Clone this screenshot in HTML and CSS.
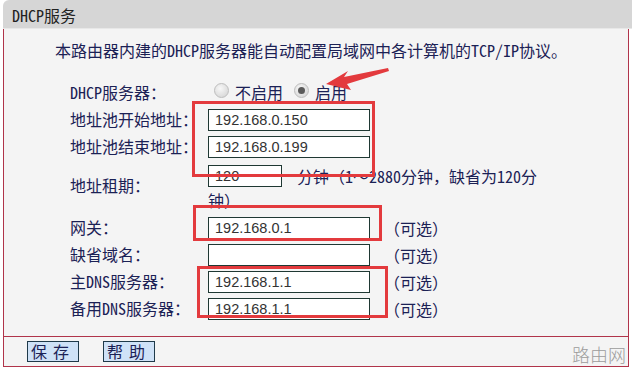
FILE: index.html
```html
<!DOCTYPE html>
<html lang="zh-CN">
<head>
<meta charset="utf-8">
<title>DHCP服务</title>
<link rel="stylesheet" href="styles.css">
</head>
<body>
<div class="page">
  <div class="hdr">DHCP服务</div>
  <div class="panel">
    <p class="intro">本路由器内建的DHCP服务器能自动配置局域网中各计算机的TCP/IP协议。</p>
    <div class="form">
      <div class="lbl r1">DHCP服务器：</div>
      <div class="fld r1">
        <span class="radio"></span><span class="rtxt">不启用</span>
        <span class="radio on"></span><span class="rtxt">启用</span>
      </div>

      <div class="lbl">地址池开始地址：</div>
      <div class="fld"><span class="inp">192.168.0.150</span></div>

      <div class="lbl">地址池结束地址：</div>
      <div class="fld"><span class="inp">192.168.0.199</span></div>

      <div class="lbl r4">地址租期：</div>
      <div class="fld r4 lease"><span class="inp short">120</span><span class="unit">分钟（1～2880分钟，缺省为120分钟）</span></div>

      <div class="lbl">网关：</div>
      <div class="fld"><span class="inp">192.168.0.1</span><span class="opt">（可选）</span></div>

      <div class="lbl">缺省域名：</div>
      <div class="fld"><span class="inp"></span><span class="opt">（可选）</span></div>

      <div class="lbl">主DNS服务器：</div>
      <div class="fld"><span class="inp">192.168.1.1</span><span class="opt">（可选）</span></div>

      <div class="lbl">备用DNS服务器：</div>
      <div class="fld"><span class="inp">192.168.1.1</span><span class="opt">（可选）</span></div>
    </div>
    <div class="foot">
      <span class="btn">保存</span>
      <span class="btn">帮助</span>
    </div>
  </div>

  <div class="mark box1"></div>
  <div class="mark box2"></div>
  <div class="mark box3"></div>
  <svg class="arrow" width="70" height="30" viewBox="0 0 70 30">
    <polygon points="0,16 22,3 18,9 62,0 63,3 21,16 25,22" fill="#e33a3d"/>
  </svg>
  <div class="wm">路由网</div>
</div>
</body>
</html>
```

FILE: styles.css
```css
html, body {
  margin: 0;
  padding: 0;
  background: #ffffff;
}
body {
  width: 632px;
  height: 370px;
  overflow: hidden;
  font-family: "Noto Sans Mono CJK SC", "Noto Sans CJK SC", sans-serif;
  font-size: 16px;
  color: #1b2155;
}
.page {
  position: relative;
  width: 632px;
  height: 370px;
}
.hdr {
  margin-left: 3px;
  height: 28px;
  line-height: 30px;
  padding-left: 9px;
  background: #d6d6d6;
  border-top-left-radius: 6px;
  border-bottom: 1px solid #e8e8e8;
  color: #222222;
}
.panel {
  margin-left: 3px;
  width: 624px;
  background: #f4f4f4;
  border-left: 1px solid #b0344a;
  border-right: 1px solid #b0344a;
  border-bottom: 1px solid #b0344a;
}
.intro {
  margin: 0;
  padding: 10px 0 0 51px;
  line-height: 22px;
  height: 22px;
  white-space: nowrap;
}
.form {
  margin-top: 17px;
  padding: 0 0 15px 66px;
  display: grid;
  grid-template-columns: 138px 1fr;
  grid-auto-rows: 27px;
  align-items: center;
}
.lbl, .fld {
  line-height: 22px;
  white-space: nowrap;
}
.r1 {
  height: 28px;
  line-height: 28px;
}
.fld.r1 {
  display: flex;
  align-items: center;
}
.form > .r1 { align-self: stretch; }
.lease {
  grid-row: span 2;
  align-self: stretch;
  white-space: normal;
  width: 338px;
  padding-top: 3px;
}
.lbl.r4 {
  grid-row: span 2;
  margin-top: -3px;
}
.radio {
  display: inline-block;
  width: 13px;
  height: 13px;
  border-radius: 50%;
  border: 1px solid #bdbdbd;
  background: radial-gradient(circle at 40% 35%, #f7f7f7 0%, #dcdcdc 70%, #cfcfcf 100%);
  margin-left: 6px;
  margin-right: 6px;
  position: relative;
  top: -2px;
}
.radio.on {
  margin-left: 11px;
}
.radio.on::after {
  content: "";
  position: absolute;
  left: 3px;
  top: 3px;
  width: 7px;
  height: 7px;
  border-radius: 50%;
  background: #5a5a5a;
}
.inp {
  display: inline-block;
  vertical-align: middle;
  box-sizing: border-box;
  width: 162px;
  height: 22px;
  border: 1px solid #1f3833;
  background: #ffffff;
  padding-left: 6px;
  font-family: "Liberation Sans", Arial, sans-serif;
  font-size: 14.5px;
  line-height: 20px;
  color: #333333;
}
.inp.short {
  width: 74px;
}
.unit {
  margin-left: 15px;
  vertical-align: middle;
}
.opt {
  margin-left: 14px;
  vertical-align: middle;
}
.foot {
  border-top: 1px solid #b0344a;
  padding: 4px 0 4px 23px;
  height: 21px;
  display: flex;
  gap: 24px;
}
.btn {
  box-sizing: border-box;
  width: 52px;
  height: 21px;
  border: 1px solid #1f3a4a;
  background: #cfe2f7;
  line-height: 19px;
  padding-left: 3px;
  letter-spacing: 6px;
  color: #1b2155;
}
.mark {
  position: absolute;
  border: 3px solid #e33a3d;
  box-sizing: border-box;
}
.box1 { left: 192px; top: 101px; width: 183px; height: 76px; }
.box2 { left: 193px; top: 205px; width: 189px; height: 36px; }
.box3 { left: 197px; top: 266px; width: 191px; height: 52px; }
.arrow {
  position: absolute;
  left: 326px;
  top: 68px;
}
.wm {
  position: absolute;
  left: 572px;
  top: 343px;
  font-family: "Noto Sans CJK SC", sans-serif;
  font-size: 18px;
  line-height: 22px;
  color: #9c9c9c;
  font-weight: 300;
}
```
